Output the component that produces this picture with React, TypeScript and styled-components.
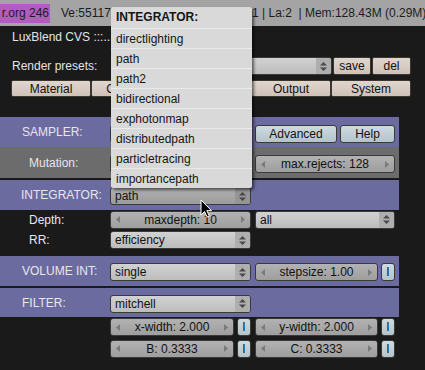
import styled, { createGlobalStyle } from 'styled-components';

const GlobalStyle = createGlobalStyle`
  body {
    margin: 0;
    background: #1a1a1a;
    font-family: "Liberation Sans", Arial, sans-serif;
    font-size: 12px;
  }
`;

const Screen = styled.div`
  position: relative;
  width: 425px;
  height: 370px;
  overflow: hidden;
  background: #1a1a1a;
  color: #e4e4e4;
`;

const TopBar = styled.div`
  height: 26px;
  background: #a4a4a4;
  display: flex;
  align-items: center;
  color: #1c1c1c;
  white-space: pre;
  overflow: hidden;
`;

const Badge = styled.div`
  width: 50px;
  height: 19px;
  flex: none;
  background: #b15dbf;
  display: flex;
  justify-content: flex-end;
  align-items: center;
  overflow: hidden;
  padding-right: 1px;
  box-sizing: border-box;
`;

const Stat = styled.span<{ $w?: number; $ml?: number }>`
  flex: none;
  margin-left: ${(p) => p.$ml ?? 0}px;
  width: ${(p) => (p.$w ? `${p.$w}px` : 'auto')};
  overflow: hidden;
`;

const Head = styled.div`
  padding-left: 11px;
`;

const Title = styled.div`
  height: 22px;
  line-height: 22px;
  padding-left: 1px;
`;

const PresetRow = styled.div`
  margin-top: 9px;
  display: grid;
  grid-template-columns: 99px 221px 38px 39px;
  column-gap: 1px;
  height: 18px;
  align-items: center;
`;

const Caption = styled.span`
  padding-left: 1px;
`;

const Tabs = styled.div`
  margin-top: 5px;
  display: grid;
  grid-template-columns: repeat(5, 80px);
  height: 17px;
`;

const BeigeButton = styled.div`
  height: 100%;
  box-sizing: border-box;
  border: 1px solid #3a3630;
  border-radius: 2px;
  background: linear-gradient(#e0d6ce, #cfc2b8);
  color: #111;
  display: flex;
  align-items: center;
  justify-content: center;
`;

const Section = styled.div<{ $gap: number }>`
  margin-top: ${(p) => p.$gap}px;
`;

const Row = styled.div<{ $tone?: 'purple' | 'gray'; $h: number }>`
  width: 399px;
  height: ${(p) => p.$h}px;
  display: grid;
  grid-template-columns: 106px 141px 140px;
  column-gap: 4px;
  align-items: center;
  background: ${(p) =>
    p.$tone === 'purple' ? '#6c6b9f' : p.$tone === 'gray' ? '#6c6c6c' : 'transparent'};
`;

const SubRow = styled(Row)`
  & + & {
    margin-top: 2px;
  }
`;

const Label = styled.span<{ $indent: number }>`
  padding-left: ${(p) => p.$indent}px;
  color: #e6e6ec;
  white-space: nowrap;
`;

const Cell = styled.div<{ $shift?: number }>`
  display: flex;
  gap: 3px;
  height: 18px;
  margin-top: ${(p) => p.$shift ?? 0}px;
`;

const Menu = styled.div<{ $active?: boolean }>`
  flex: 1;
  height: 18px;
  box-sizing: border-box;
  border: 1px solid #3a3a3a;
  border-radius: 3px;
  background: ${(p) =>
    p.$active ? 'linear-gradient(#b0b0b0, #9c9c9c)' : 'linear-gradient(#d2d2d2, #bcbcbc)'};
  color: #111;
  display: flex;
  align-items: center;
  overflow: hidden;
`;

const MenuText = styled.span`
  flex: 1;
  padding-left: 4px;
  white-space: nowrap;
  overflow: hidden;
`;

const MenuArrow = styled.span<{ $active?: boolean }>`
  width: 15px;
  height: 100%;
  display: flex;
  align-items: center;
  justify-content: center;
  background: ${(p) => (p.$active ? '#959595' : '#aeaeae')};
`;

const Num = styled.div`
  flex: 1;
  height: 18px;
  box-sizing: border-box;
  border: 1px solid #3a3a3a;
  border-radius: 3px;
  background: linear-gradient(#b2b2b2, #9e9e9e);
  color: #111;
  display: flex;
  align-items: center;
  justify-content: space-between;
  padding: 0 5px;
  white-space: nowrap;
`;

const BlueButton = styled.div<{ $w?: number }>`
  ${(p) => (p.$w ? `width: ${p.$w}px; flex: none;` : 'flex: 1;')}
  height: 18px;
  box-sizing: border-box;
  border: 1px solid #3a3a3a;
  border-radius: 3px;
  background: linear-gradient(#cddbe0, #b4c4ca);
  color: #111;
  display: flex;
  align-items: center;
  justify-content: center;
`;

const Popup = styled.div`
  position: absolute;
  left: 111px;
  top: 7px;
  width: 141px;
  background: #d9d9d9;
  color: #151515;
  box-shadow: 2px 2px 3px rgba(0, 0, 0, 0.55);
  border-radius: 2px;
`;

const PopupHead = styled.div`
  height: 21px;
  line-height: 21px;
  padding-left: 5px;
  font-weight: bold;
`;

const PopupItem = styled.div`
  height: 20px;
  line-height: 20px;
  padding-left: 5px;
  box-sizing: border-box;
  border-top: 1px solid #ebebeb;
`;

const Cursor = styled.svg`
  position: absolute;
  left: 200px;
  top: 199px;
`;

const UpDown = () => (
  <svg width="7" height="9" viewBox="0 0 7 9">
    <path d="M3.5 0 L7 3.5 H0 Z M0 5.5 H7 L3.5 9 Z" fill="#4a4a4a" />
  </svg>
);

const Tri = ({ dir }: { dir: 'l' | 'r' }) => (
  <svg width="4" height="7" viewBox="0 0 4 7">
    <path d={dir === 'l' ? 'M4 0 V7 L0 3.5 Z' : 'M0 0 V7 L4 3.5 Z'} fill="#7a7a7a" />
  </svg>
);

const Dropdown = ({ text, active }: { text: string; active?: boolean }) => (
  <Menu $active={active}>
    <MenuText>{text}</MenuText>
    <MenuArrow $active={active}>
      <UpDown />
    </MenuArrow>
  </Menu>
);

const Slider = ({ text }: { text: string }) => (
  <Num>
    <Tri dir="l" />
    <span>{text}</span>
    <Tri dir="r" />
  </Num>
);

const integrators = [
  'directlighting',
  'path',
  'path2',
  'bidirectional',
  'exphotonmap',
  'distributedpath',
  'particletracing',
  'importancepath',
];

const App = () => (
  <Screen>
    <GlobalStyle />
    <TopBar>
      <Badge>r.org 246</Badge>
      <Stat $ml={11} $w={191}>Ve:55117</Stat>
      <Stat>1 | La:2  | Mem:128.43M (0.29M)</Stat>
    </TopBar>

    <Head>
      <Title>LuxBlend CVS :::...</Title>
      <PresetRow>
        <Caption>Render presets:</Caption>
        <Dropdown text="" />
        <BeigeButton>save</BeigeButton>
        <BeigeButton>del</BeigeButton>
      </PresetRow>
      <Tabs>
        {['Material', 'Cam/Env', 'Render', 'Output', 'System'].map((t) => (
          <BeigeButton key={t}>{t}</BeigeButton>
        ))}
      </Tabs>
    </Head>

    <Section $gap={20}>
      <Row $tone="purple" $h={30}>
        <Label $indent={22}>SAMPLER:</Label>
        <Cell $shift={4}>
          <Dropdown text="" />
        </Cell>
        <Cell $shift={4}>
          <BlueButton $w={82}>Advanced</BlueButton>
          <BlueButton>Help</BlueButton>
        </Cell>
      </Row>
      <Row $tone="gray" $h={31}>
        <Label $indent={29}>Mutation:</Label>
        <Cell $shift={3}>
          <Slider text="" />
        </Cell>
        <Cell $shift={3}>
          <Slider text="max.rejects: 128" />
        </Cell>
      </Row>
    </Section>

    <Section $gap={2}>
      <Row $tone="purple" $h={30}>
        <Label $indent={21}>INTEGRATOR:</Label>
        <Cell $shift={2}>
          <Dropdown text="path" active />
        </Cell>
      </Row>
      <SubRow $h={19}>
        <Label $indent={29}>Depth:</Label>
        <Cell>
          <Slider text="maxdepth: 10" />
        </Cell>
        <Cell>
          <Dropdown text="all" />
        </Cell>
      </SubRow>
      <SubRow $h={18}>
        <Label $indent={29}>RR:</Label>
        <Cell>
          <Dropdown text="efficiency" />
        </Cell>
      </SubRow>
    </Section>

    <Section $gap={7}>
      <Row $tone="purple" $h={30}>
        <Label $indent={22}>VOLUME INT:</Label>
        <Cell $shift={2}>
          <Dropdown text="single" />
        </Cell>
        <Cell $shift={2}>
          <Slider text="stepsize: 1.00" />
          <BlueButton $w={14}>I</BlueButton>
        </Cell>
      </Row>
    </Section>

    <Section $gap={2}>
      <Row $tone="purple" $h={29}>
        <Label $indent={22}>FILTER:</Label>
        <Cell $shift={2}>
          <Dropdown text="mitchell" />
        </Cell>
      </Row>
      <SubRow $h={20}>
        <span />
        <Cell>
          <Slider text="x-width: 2.000" />
          <BlueButton $w={14}>I</BlueButton>
        </Cell>
        <Cell>
          <Slider text="y-width: 2.000" />
          <BlueButton $w={14}>I</BlueButton>
        </Cell>
      </SubRow>
      <SubRow $h={19}>
        <span />
        <Cell>
          <Slider text="B: 0.3333" />
          <BlueButton $w={14}>I</BlueButton>
        </Cell>
        <Cell>
          <Slider text="C: 0.3333" />
          <BlueButton $w={14}>I</BlueButton>
        </Cell>
      </SubRow>
    </Section>

    <Popup>
      <PopupHead>INTEGRATOR:</PopupHead>
      {integrators.map((name) => (
        <PopupItem key={name}>{name}</PopupItem>
      ))}
    </Popup>

    <Cursor width="13" height="19" viewBox="0 0 13 19">
      <path
        d="M1 1 L1 16 L4.5 12.5 L7.2 18 L9.4 17 L6.8 11.6 L11.5 11.6 Z"
        fill="#000"
        stroke="#fff"
        strokeWidth="1"
        strokeLinejoin="round"
      />
    </Cursor>
  </Screen>
);

export default App;
